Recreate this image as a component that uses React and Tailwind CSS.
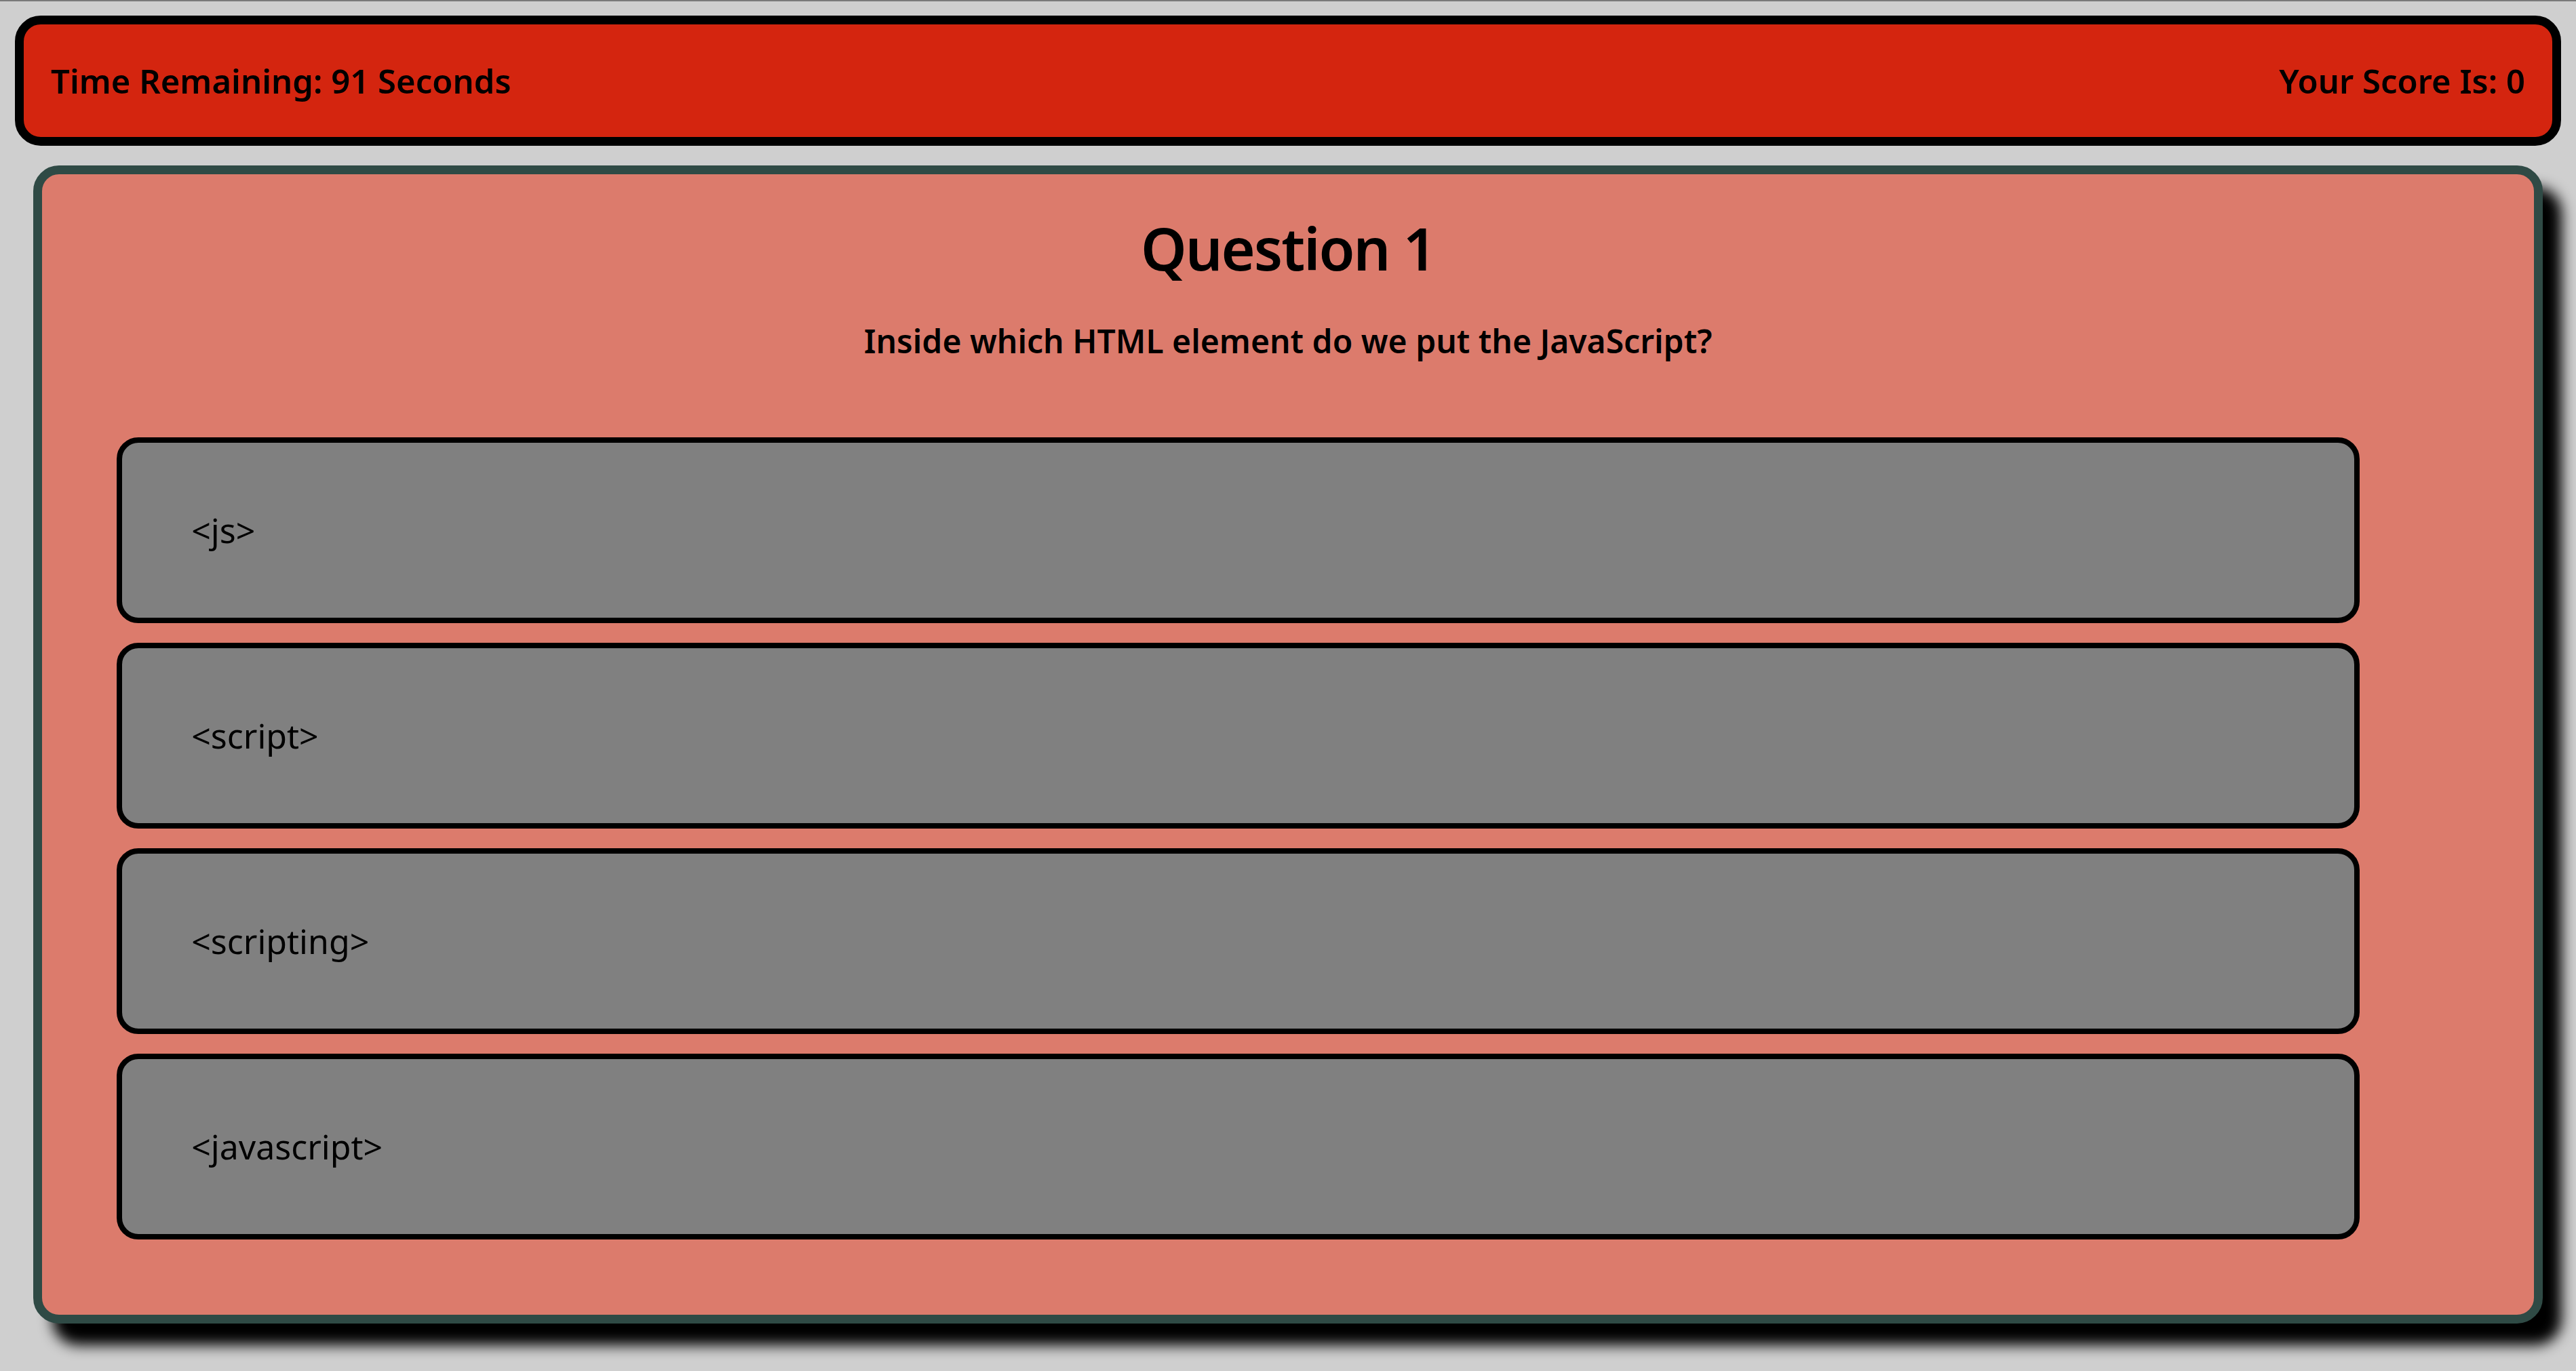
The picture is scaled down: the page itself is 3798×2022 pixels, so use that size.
import React from 'react'

const answers = ["<js>", "<script>", "<scripting>", "<javascript>"]

const App = () => {
  const [score] = React.useState(0)
  const [time] = React.useState(91)

  return (
    <div className="min-h-screen bg-[#cfcfcf] text-black font-['Noto_Sans',sans-serif]">
      <div className="h-[2px] bg-[#7a7a7a]"></div>
      {/* top bar */}
      <div className="mx-[22px] mt-[21px] h-[192px] flex items-center justify-between px-[40px] bg-[#d4250f] border-[13px] border-black rounded-[38px]">
        <span className="text-[49px] leading-none font-semibold">Time Remaining: {time} Seconds</span>
        <span className="text-[49px] leading-none font-semibold">Your Score Is: {score}</span>
      </div>

      {/* question card */}
      <div className="mx-[49px] mt-[29px] pt-[66px] pb-[111px] bg-[#dc7b6c] border-[13px] border-[#2f4a45] rounded-[38px] shadow-[28px_32px_20px_rgba(0,0,0,1)]">
        <h2 className="text-center text-[86px] leading-none font-semibold tracking-[-2px]">Question 1</h2>
        <p className="mt-[70px] text-center text-[48px] leading-none font-semibold">Inside which HTML element do we put the JavaScript?</p>
        <div className="mt-[118px] flex flex-col gap-[29px]">
          {
            answers.map((answer, index) => {
              return (
                <button key={index} className="ml-[3%] w-[90%] h-[274px] flex items-center pl-[102px] bg-[#808080] border-[8px] border-black rounded-[32px] text-left">
                  <span className="text-[50px] leading-none">{answer}</span>
                </button>
              )
            })
          }
        </div>
      </div>
    </div>
  )
}

export default App
